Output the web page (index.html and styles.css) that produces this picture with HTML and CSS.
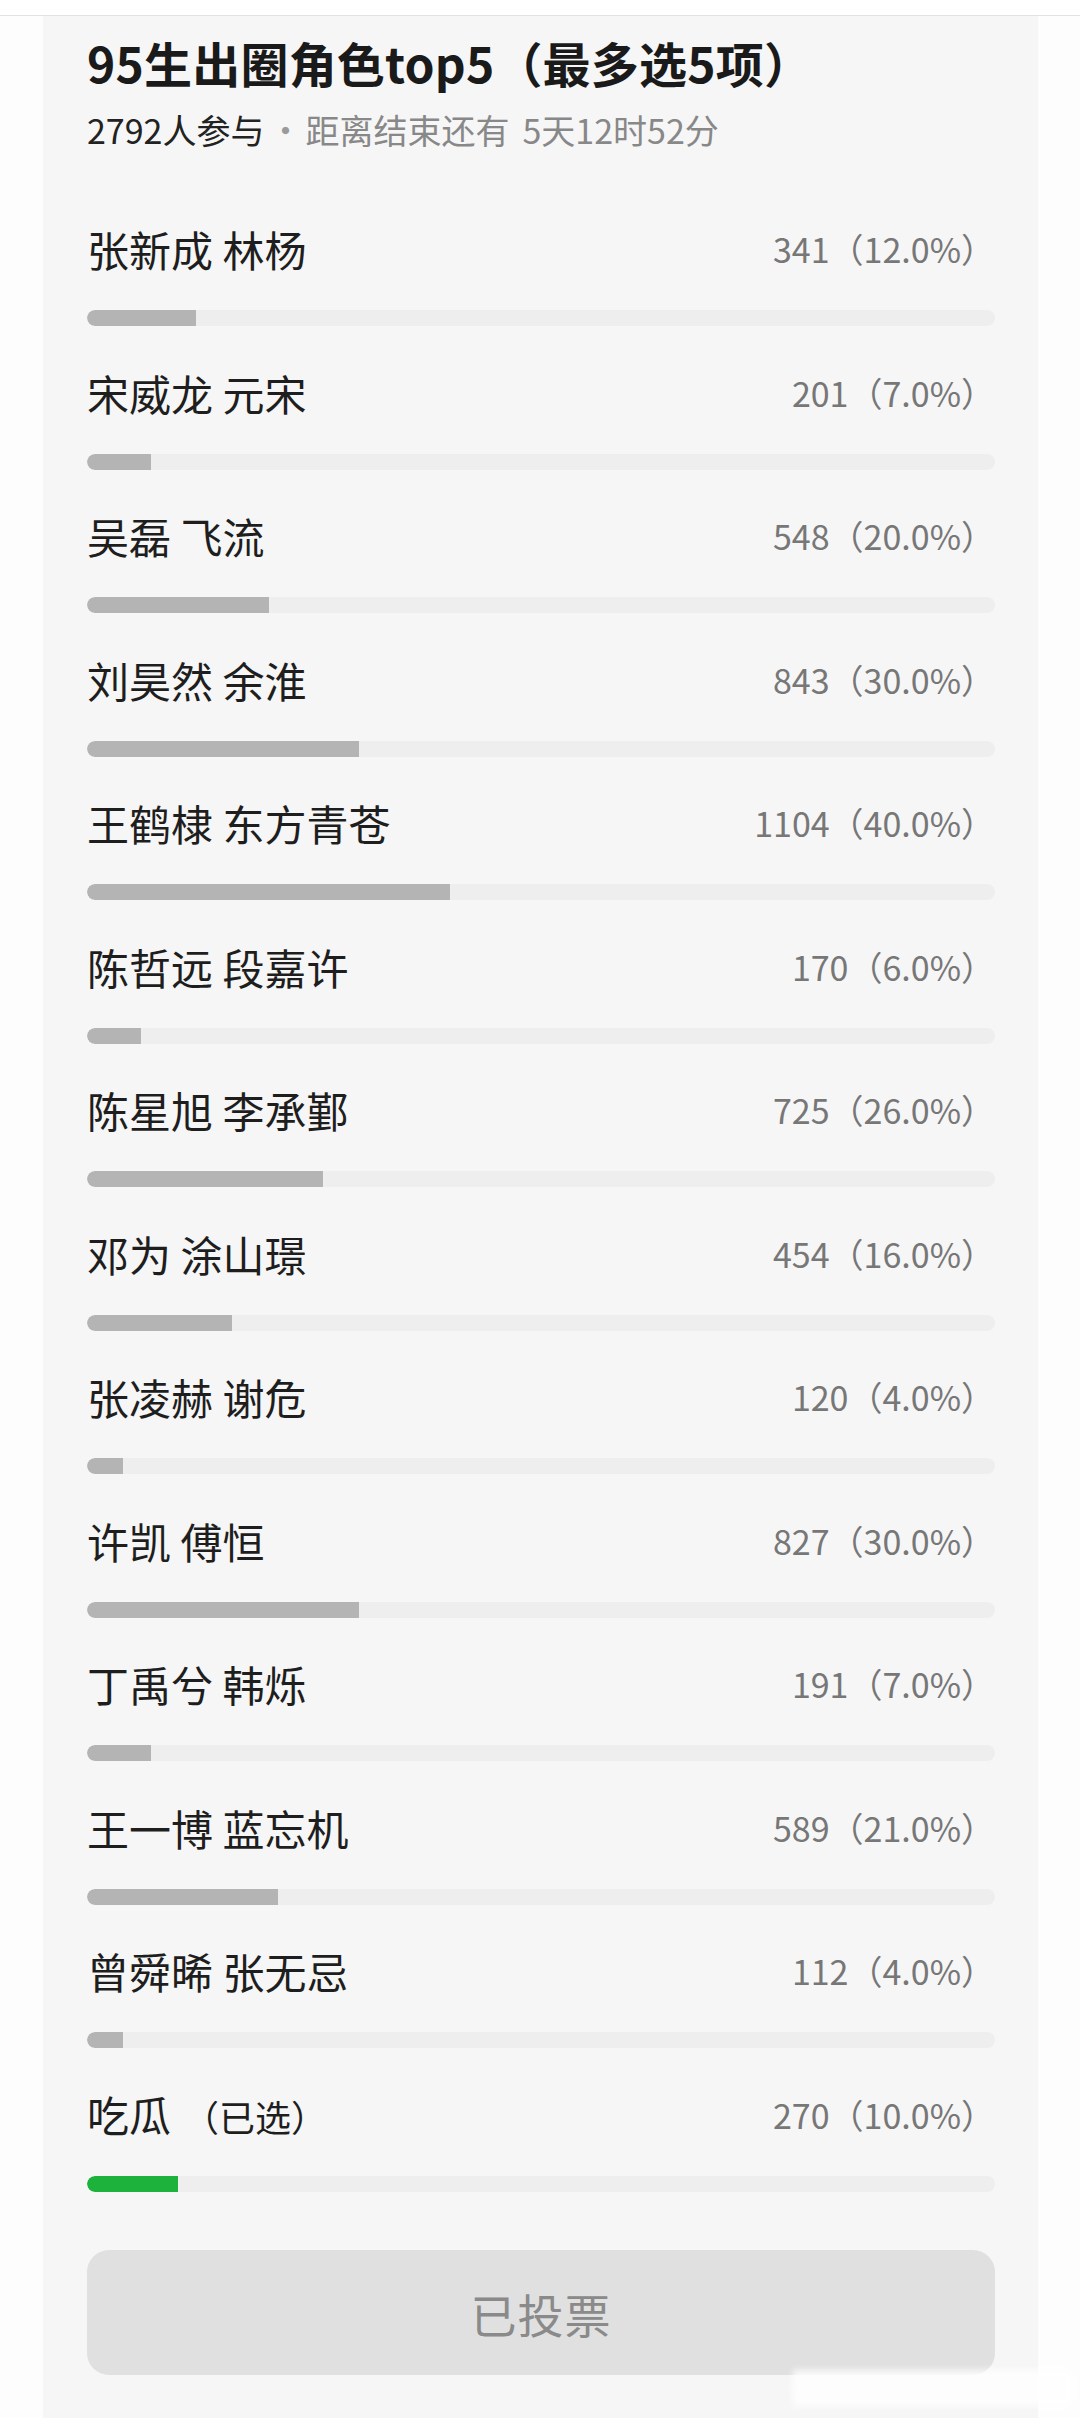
FILE: index.html
```html
<!DOCTYPE html>
<html lang="zh-CN">
<head>
<meta charset="utf-8">
<title>95生出圈角色top5</title>
<link rel="stylesheet" href="styles.css">
</head>
<body>
<div class="topstrip"></div>
<main class="card">
  <h1 class="title">95生出圈角色top5（最多选5项）</h1>
  <p class="meta"><span class="count-people">2792人参与</span><span class="dot">·</span><span class="remain">距离结束还有</span><span class="remain time">5天12时52分</span></p>
  <ul class="options">
    <li class="option"><div class="row"><span class="name">张新成 林杨</span><span class="votes">341（12.0%）</span></div><div class="track"><div class="fill" style="width:12%"></div></div></li>
    <li class="option"><div class="row"><span class="name">宋威龙 元宋</span><span class="votes">201（7.0%）</span></div><div class="track"><div class="fill" style="width:7%"></div></div></li>
    <li class="option"><div class="row"><span class="name">吴磊 飞流</span><span class="votes">548（20.0%）</span></div><div class="track"><div class="fill" style="width:20%"></div></div></li>
    <li class="option"><div class="row"><span class="name">刘昊然 余淮</span><span class="votes">843（30.0%）</span></div><div class="track"><div class="fill" style="width:30%"></div></div></li>
    <li class="option"><div class="row"><span class="name">王鹤棣 东方青苍</span><span class="votes">1104（40.0%）</span></div><div class="track"><div class="fill" style="width:40%"></div></div></li>
    <li class="option"><div class="row"><span class="name">陈哲远 段嘉许</span><span class="votes">170（6.0%）</span></div><div class="track"><div class="fill" style="width:6%"></div></div></li>
    <li class="option"><div class="row"><span class="name">陈星旭 李承鄞</span><span class="votes">725（26.0%）</span></div><div class="track"><div class="fill" style="width:26%"></div></div></li>
    <li class="option"><div class="row"><span class="name">邓为 涂山璟</span><span class="votes">454（16.0%）</span></div><div class="track"><div class="fill" style="width:16%"></div></div></li>
    <li class="option"><div class="row"><span class="name">张凌赫 谢危</span><span class="votes">120（4.0%）</span></div><div class="track"><div class="fill" style="width:4%"></div></div></li>
    <li class="option"><div class="row"><span class="name">许凯 傅恒</span><span class="votes">827（30.0%）</span></div><div class="track"><div class="fill" style="width:30%"></div></div></li>
    <li class="option"><div class="row"><span class="name">丁禹兮 韩烁</span><span class="votes">191（7.0%）</span></div><div class="track"><div class="fill" style="width:7%"></div></div></li>
    <li class="option"><div class="row"><span class="name">王一博 蓝忘机</span><span class="votes">589（21.0%）</span></div><div class="track"><div class="fill" style="width:21%"></div></div></li>
    <li class="option"><div class="row"><span class="name">曾舜晞 张无忌</span><span class="votes">112（4.0%）</span></div><div class="track"><div class="fill" style="width:4%"></div></div></li>
    <li class="option"><div class="row"><span class="name">吃瓜<span class="chosen">（已选）</span></span><span class="votes">270（10.0%）</span></div><div class="track"><div class="fill fill-selected" style="width:10%"></div></div></li>
  </ul>
  <button class="voted" type="button">已投票</button>
  <div class="watermark"></div>
</main>
</body>
</html>
```

FILE: styles.css
```css
* {
  box-sizing: border-box;
}

html, body {
  margin: 0;
  padding: 0;
  background: #fdfdfd;
}

body {
  font-family: "Noto Sans CJK SC", "Noto Sans", sans-serif;
  color: #1c1c1c;
  width: 1080px;
  height: 2418px;
  overflow: hidden;
}

.topstrip {
  height: 16px;
  background: #ffffff;
  border-bottom: 1px solid #e2e2e2;
}

.card {
  position: relative;
  margin: 0 42px 0 43px;
  background: #f6f6f6;
  padding: 16px 43px 43px 44px;
  min-height: 2402px;
}

.title {
  margin: 0;
  font-size: 48px;
  line-height: 60px;
  font-weight: 700;
  color: #1a1a1a;
  letter-spacing: 0.2px;
}

.meta {
  margin: 16px 0 0;
  font-size: 34px;
  line-height: 44px;
  display: flex;
  align-items: center;
}

.count-people {
  color: #222222;
}

.dot {
  color: #9a9a9a;
  margin: 0 3px 0 4px;
}

.remain {
  color: #888888;
}

.time {
  margin-left: 13px;
}

.options {
  list-style: none;
  margin: 69px 0 0;
  padding: 0;
  display: flex;
  flex-direction: column;
  gap: 38.5px;
}

.option {
  display: flex;
  flex-direction: column;
  gap: 33px;
}

.row {
  height: 56px;
  display: flex;
  align-items: center;
  justify-content: space-between;
}

.name {
  font-size: 42px;
  line-height: 56px;
  color: #1e1e1e;
}

.chosen {
  font-size: 36px;
  margin-left: 12px;
}

.votes {
  font-size: 34px;
  line-height: 56px;
  color: #777777;
}

.track {
  height: 16px;
  border-radius: 8px;
  background: #eeeeee;
  overflow: hidden;
}

.fill {
  height: 100%;
  background: #b4b4b4;
  border-radius: 8px 0 0 8px;
}

.fill-selected {
  background: #1cb23c;
}

.voted {
  display: block;
  width: 100%;
  height: 125px;
  margin-top: 58.5px;
  border: none;
  border-radius: 22px;
  background: #e0e0e0;
  color: #8a8a8a;
  font-family: "Noto Sans CJK SC", "Noto Sans", sans-serif;
  font-size: 46px;
  letter-spacing: 1px;
}

.watermark {
  position: absolute;
  left: 750px;
  top: 2354px;
  width: 280px;
  height: 36px;
  background: #ffffff;
  opacity: 0.85;
  filter: blur(3px);
}
```
